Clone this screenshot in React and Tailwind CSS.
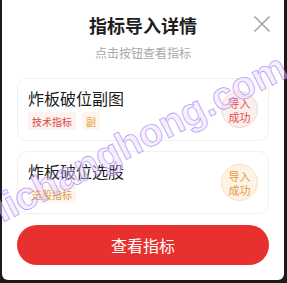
import React from "react";

const font = { fontFamily: '"Noto Sans CJK SC", "Noto Sans", sans-serif' };

function Badge({ tone }) {
  const cls =
    tone === "red"
      ? "bg-[#fdeeee] border-[#f6d6d6] text-[#e0514b]"
      : "bg-[#fdf3e7] border-[#f7e2c6] text-[#e59a3e]";
  return (
    <div
      className={`w-[37px] h-[37px] rounded-full border flex flex-col items-center justify-center text-[11px] leading-[14px] ${cls}`}
    >
      <span>导入</span>
      <span>成功</span>
    </div>
  );
}

function Tag({ tone, children }) {
  const cls =
    tone === "red"
      ? "bg-[#fdf1f1] text-[#d64a43]"
      : "bg-[#fdf6ec] text-[#e79b3f]";
  return (
    <span className={`px-[4px] h-[18px] flex items-center text-[10px] rounded-[2px] ${cls}`}>
      {children}
    </span>
  );
}

function Card({ title, tags, tone }) {
  return (
    <div className="h-[63px] rounded-[10px] border border-[#f1f1f1] flex items-center justify-between pl-[10px] pr-[10px]">
      <div className="flex flex-col">
        <div className="text-[16px] leading-[22px] text-[#1c1c1c] mt-[-2px]">{title}</div>
        <div className="flex gap-[6px] mt-[3px]">
          {tags.map((t) => (
            <Tag key={t.text} tone={t.tone}>
              {t.text}
            </Tag>
          ))}
        </div>
      </div>
      <Badge tone={tone} />
    </div>
  );
}

export default function App() {
  return (
    <div className="w-[287px] h-[283px] bg-[#1b1b1b] relative overflow-hidden" style={font}>
      <div className="ml-[2px] w-[282px] h-[280px] bg-white rounded-b-[6px] flex flex-col px-[15px]">
        <div className="relative flex flex-col items-center pt-[13px]">
          <div className="text-[18px] leading-[24px] font-semibold text-[#1e1e1e]">指标导入详情</div>
          <div className="text-[12px] leading-[16px] text-[#a8a8a8] mt-[8px]">点击按钮查看指标</div>
          <svg
            className="absolute right-[-2px] top-[15px]"
            width="18"
            height="18"
            viewBox="0 0 18 18"
            fill="none"
            stroke="#9a9a9a"
            strokeWidth="1.3"
          >
            <path d="M1.5 1.5 L16.5 16.5 M16.5 1.5 L1.5 16.5" />
          </svg>
        </div>
        <div className="flex flex-col gap-[10px] mt-[17px]">
          <Card
            title="炸板破位副图"
            tone="red"
            tags={[
              { text: "技术指标", tone: "red" },
              { text: "副", tone: "orange" },
            ]}
          />
          <Card title="炸板破位选股" tone="orange" tags={[{ text: "选股指标", tone: "orange" }]} />
        </div>
        <button className="mt-[11px] h-[40px] w-full rounded-full bg-[#e8302e] text-white text-[16px]">
          查看指标
        </button>
      </div>
      <div className="pointer-events-none absolute left-[-22px] top-[118px] w-[324px] h-[39px] flex items-center justify-center whitespace-nowrap rotate-[-27deg] text-[39px] leading-none font-bold text-[rgba(245,215,250,0.45)] [-webkit-text-stroke:0.8px_rgba(150,130,245,0.75)] [font-family:'Liberation_Sans',sans-serif]">
        lichanghong.com
      </div>
    </div>
  );
}
